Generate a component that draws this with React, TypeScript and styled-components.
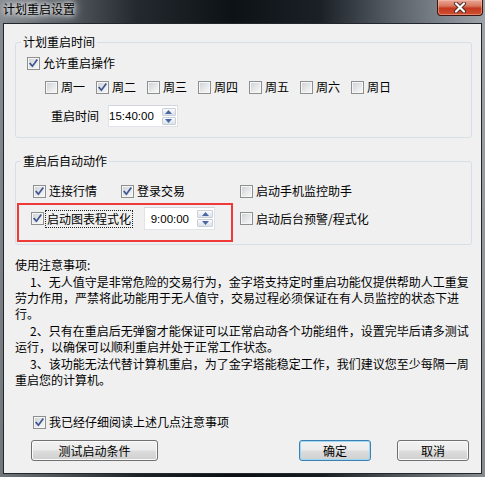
import React from "react";
import styled, { createGlobalStyle } from "styled-components";

const Global = createGlobalStyle`
  html, body { margin: 0; padding: 0; }
  body {
    font-family: "Noto Sans CJK SC", "Noto Sans", sans-serif;
    font-size: 12px;
  }
  * { box-sizing: border-box; }
`;

const cjk = `"Noto Sans CJK SC", "Noto Sans", sans-serif`;

const Window = styled.div`
  width: 485px;
  height: 477px;
  display: flex;
  flex-direction: column;
  overflow: hidden;
  background:
    linear-gradient(180deg, rgba(0,0,0,0) 0%, rgba(0,0,0,0.15) 100%),
    linear-gradient(90deg, #868c92 0%, #5a6066 12%, #23292e 28%, #0d1216 48%, #1a2026 66%, #5c636a 82%, #9ea4aa 100%);
`;

const TitleBar = styled.div`
  height: 23px;
  flex: none;
  display: flex;
  align-items: flex-start;
  padding: 0 2px 0 3px;
`;

const Title = styled.div`
  margin-top: 2px;
  font-family: ${cjk};
  font-size: 12px;
  line-height: 14px;
  color: #000;
  text-shadow: 0 0 4px #fff, 0 0 8px rgba(255, 255, 255, 0.9), 0 0 12px rgba(255, 255, 255, 0.7);
`;

const CloseButton = styled.div`
  margin-left: auto;
  width: 46px;
  height: 16px;
  border: 1px solid #3b1710;
  border-top: none;
  border-radius: 0 0 4px 4px;
  background: linear-gradient(180deg, #e8a898 0%, #d8765f 40%, #c4391f 55%, #cf5034 100%);
  box-shadow: inset 0 0 0 1px rgba(255, 200, 185, 0.45);
  display: flex;
  align-items: center;
  justify-content: center;
`;

const Client = styled.div`
  flex: 1;
  margin: 0 3px 3px 3px;
  border: 1px solid #23272b;
  background: #f0f0f0;
  display: flex;
  flex-direction: column;
  padding: 10px 9px 12px 11px;
`;

const Group = styled.fieldset<{ $mt?: number }>`
  margin: ${(p) => p.$mt ?? 0}px 0 0 0;
  padding: 0;
  border: 1px solid #d5dfe5;
  border-radius: 3px;
  min-inline-size: auto;
`;

const Legend = styled.legend`
  margin-left: 5px;
  padding: 0 2px;
  font-family: ${cjk};
  font-size: 12px;
  line-height: 16px;
  color: #000;
`;

const GroupBody = styled.div<{ $pt: number; $pb: number }>`
  display: flex;
  flex-direction: column;
  padding: ${(p) => p.$pt}px 0 ${(p) => p.$pb}px 0;
`;

const Row = styled.div<{ $pl: number; $mt?: number; $h?: number }>`
  display: flex;
  align-items: center;
  padding-left: ${(p) => p.$pl}px;
  margin-top: ${(p) => p.$mt ?? 0}px;
  ${(p) => (p.$h ? `height: ${p.$h}px;` : "")}
`;

const TopRow = styled.div<{ $pl: number; $mt?: number }>`
  display: flex;
  align-items: flex-start;
  padding-left: ${(p) => p.$pl}px;
  margin-top: ${(p) => p.$mt ?? 0}px;
`;

const CheckLabel = styled.label<{ $w?: number }>`
  display: inline-flex;
  align-items: center;
  gap: 3px;
  height: 18px;
  flex: none;
  font-family: ${cjk};
  font-size: 12px;
  line-height: 16px;
  color: #000;
  white-space: nowrap;
  ${(p) => (p.$w ? `width: ${p.$w}px;` : "")}
`;

const Box = styled.span`
  width: 13px;
  height: 13px;
  flex: none;
  border: 1px solid #8e8f8f;
  background: linear-gradient(135deg, #cdd0d4 0%, #e6e8ea 55%, #fafafa 100%);
  box-shadow: inset 0 0 0 1px #f6f6f6;
  display: inline-flex;
  align-items: center;
  justify-content: center;
`;

const FocusText = styled.span`
  outline: 1px dotted #222;
  outline-offset: 0;
  padding: 0 1px 0 0;
  margin-left: -1px;
  padding-left: 1px;
`;

const FieldLabel = styled.span`
  font-family: ${cjk};
  font-size: 12px;
  line-height: 16px;
  color: #000;
  margin-right: 9px;
`;

const Spin = styled.div<{ $w: number; $h: number }>`
  width: ${(p) => p.$w}px;
  height: ${(p) => p.$h}px;
  flex: none;
  border: 1px solid #e0e3e8;
  border-top-color: #d2d6dc;
  background: #fff;
  display: flex;
  align-items: center;
  padding-right: 1px;
`;

const SpinValue = styled.span`
  flex: 1;
  text-align: right;
  padding-right: 8px;
  font-family: "Liberation Sans", Arial, sans-serif;
  font-size: 11.5px;
  color: #000;
`;

const SpinButtons = styled.div`
  display: flex;
  flex-direction: column;
  gap: 1px;
  width: 16px;
`;

const SpinBtn = styled.div`
  height: 8px;
  border: 1px solid #c9d0d9;
  border-radius: 1px;
  background: linear-gradient(180deg, #fbfcfd 0%, #e7ebf0 60%, #dde3ea 100%);
  display: flex;
  align-items: center;
  justify-content: center;
`;

const Highlight = styled.div`
  width: 216px;
  height: 39px;
  margin-left: 1px;
  flex: none;
  border: 2px solid #ef3a3a;
  display: flex;
  align-items: flex-start;
  padding: 2px 0 0 12px;
`;

const HighlightInner = styled.div`
  display: flex;
  align-items: center;
  height: 23px;
  gap: 12px;
`;

const SideCell = styled.div`
  display: flex;
  align-items: center;
  height: 23px;
  margin: 4px 0 0 7px;
`;

const Notes = styled.div`
  margin-top: 12px;
  font-family: ${cjk};
  font-size: 12px;
  line-height: 16px;
  color: #000;
`;

const Para = styled.div`
  margin-top: 1px;
`;

const Line = styled.div<{ $indent?: boolean }>`
  white-space: nowrap;
  ${(p) => (p.$indent ? "padding-left: 15px;" : "")}
`;

const Footer = styled.div`
  margin-top: auto;
  display: flex;
  flex-direction: column;
  gap: 9px;
`;

const ButtonRow = styled.div`
  display: flex;
  align-items: center;
  padding: 0 3px 0 16px;
`;

const Button = styled.button<{ $w: number; $default?: boolean; $ml?: string }>`
  width: ${(p) => p.$w}px;
  height: 21px;
  flex: none;
  margin-left: ${(p) => p.$ml ?? "0"};
  padding: 0;
  border: 1px solid ${(p) => (p.$default ? "#3c7fb1" : "#707070")};
  border-radius: 3px;
  background: linear-gradient(180deg, #f2f2f2 0%, #ebebeb 48%, #dddddd 52%, #cfcfcf 100%);
  box-shadow: inset 0 0 0 1px ${(p) => (p.$default ? "#9fd8f5" : "#fbfbfb")};
  font-family: ${cjk};
  font-size: 12px;
  line-height: 16px;
  color: #000;
`;

const CheckMark = () => (
  <svg width="9" height="9" viewBox="0 0 9 9">
    <path d="M1.2 4.6 L3.4 7.2 L7.8 1.2" fill="none" stroke="#3d5490" strokeWidth="1.7" strokeLinecap="square" />
  </svg>
);

const Check: React.FC<{ checked?: boolean; w?: number; focus?: boolean; children: React.ReactNode }> = ({
  checked,
  w,
  focus,
  children,
}) => (
  <CheckLabel $w={w}>
    <Box>{checked ? <CheckMark /> : null}</Box>
    {focus ? <FocusText>{children}</FocusText> : <span>{children}</span>}
  </CheckLabel>
);

const Triangle: React.FC<{ up?: boolean }> = ({ up }) => (
  <svg width="7" height="4" viewBox="0 0 7 4">
    <path d={up ? "M0 4 L3.5 0 L7 4 Z" : "M0 0 L3.5 4 L7 0 Z"} fill="#4a67a3" />
  </svg>
);

const SpinEdit: React.FC<{ value: string; w: number; h: number }> = ({ value, w, h }) => (
  <Spin $w={w} $h={h}>
    <SpinValue>{value}</SpinValue>
    <SpinButtons>
      <SpinBtn>
        <Triangle up />
      </SpinBtn>
      <SpinBtn>
        <Triangle />
      </SpinBtn>
    </SpinButtons>
  </Spin>
);

const days = ["周一", "周二", "周三", "周四", "周五", "周六", "周日"];

export default function App() {
  return (
    <>
      <Global />
      <Window>
        <TitleBar>
          <Title>计划重启设置</Title>
          <CloseButton>
            <svg width="14" height="11" viewBox="0 0 14 11">
              <path d="M3 1.5 L11 9.5 M11 1.5 L3 9.5" stroke="#4a2a24" strokeWidth="4" strokeLinecap="round" />
              <path d="M3 1.5 L11 9.5 M11 1.5 L3 9.5" stroke="#ffffff" strokeWidth="2.2" strokeLinecap="round" />
            </svg>
          </CloseButton>
        </TitleBar>
        <Client>
          <Group>
            <Legend>计划重启时间</Legend>
            <GroupBody $pt={4} $pb={10}>
              <Row $pl={11}>
                <Check checked>允许重启操作</Check>
              </Row>
              <Row $pl={29} $mt={6}>
                {days.map((d, i) => (
                  <Check key={d} checked={i === 1} w={51}>
                    {d}
                  </Check>
                ))}
              </Row>
              <Row $pl={35} $mt={9}>
                <FieldLabel>重启时间</FieldLabel>
                <SpinEdit value="15:40:00" w={70} h={22} />
              </Row>
            </GroupBody>
          </Group>

          <Group $mt={15}>
            <Legend>重启后自动动作</Legend>
            <GroupBody $pt={13} $pb={2}>
              <Row $pl={17}>
                <Check checked w={88}>连接行情</Check>
                <Check checked w={119}>登录交易</Check>
                <Check>启动手机监控助手</Check>
              </Row>
              <TopRow $pl={0} $mt={3}>
                <Highlight>
                  <HighlightInner>
                    <Check checked focus>启动图表程式化</Check>
                    <SpinEdit value="9:00:00" w={71} h={23} />
                  </HighlightInner>
                </Highlight>
                <SideCell>
                  <Check>启动后台预警/程式化</Check>
                </SideCell>
              </TopRow>
            </GroupBody>
          </Group>

          <Notes>
            <Line>使用注意事项:</Line>
            <Para>
              <Line $indent>1、无人值守是非常危险的交易行为，金字塔支持定时重启功能仅提供帮助人工重复</Line>
              <Line>劳力作用，严禁将此功能用于无人值守，交易过程必须保证在有人员监控的状态下进</Line>
              <Line>行。</Line>
            </Para>
            <Para>
              <Line $indent>2、只有在重启后无弹窗才能保证可以正常启动各个功能组件，设置完毕后请多测试</Line>
              <Line>运行，以确保可以顺利重启并处于正常工作状态。</Line>
            </Para>
            <Para>
              <Line $indent>3、该功能无法代替计算机重启，为了金字塔能稳定工作，我们建议您至少每隔一周</Line>
              <Line>重启您的计算机。</Line>
            </Para>
          </Notes>

          <Footer>
            <Row $pl={18}>
              <Check checked>我已经仔细阅读上述几点注意事项</Check>
            </Row>
            <ButtonRow>
              <Button $w={127}>测试启动条件</Button>
              <Button $w={72} $default $ml="auto">确定</Button>
              <Button $w={72} $ml="26px">取消</Button>
            </ButtonRow>
          </Footer>
        </Client>
      </Window>
    </>
  );
}
